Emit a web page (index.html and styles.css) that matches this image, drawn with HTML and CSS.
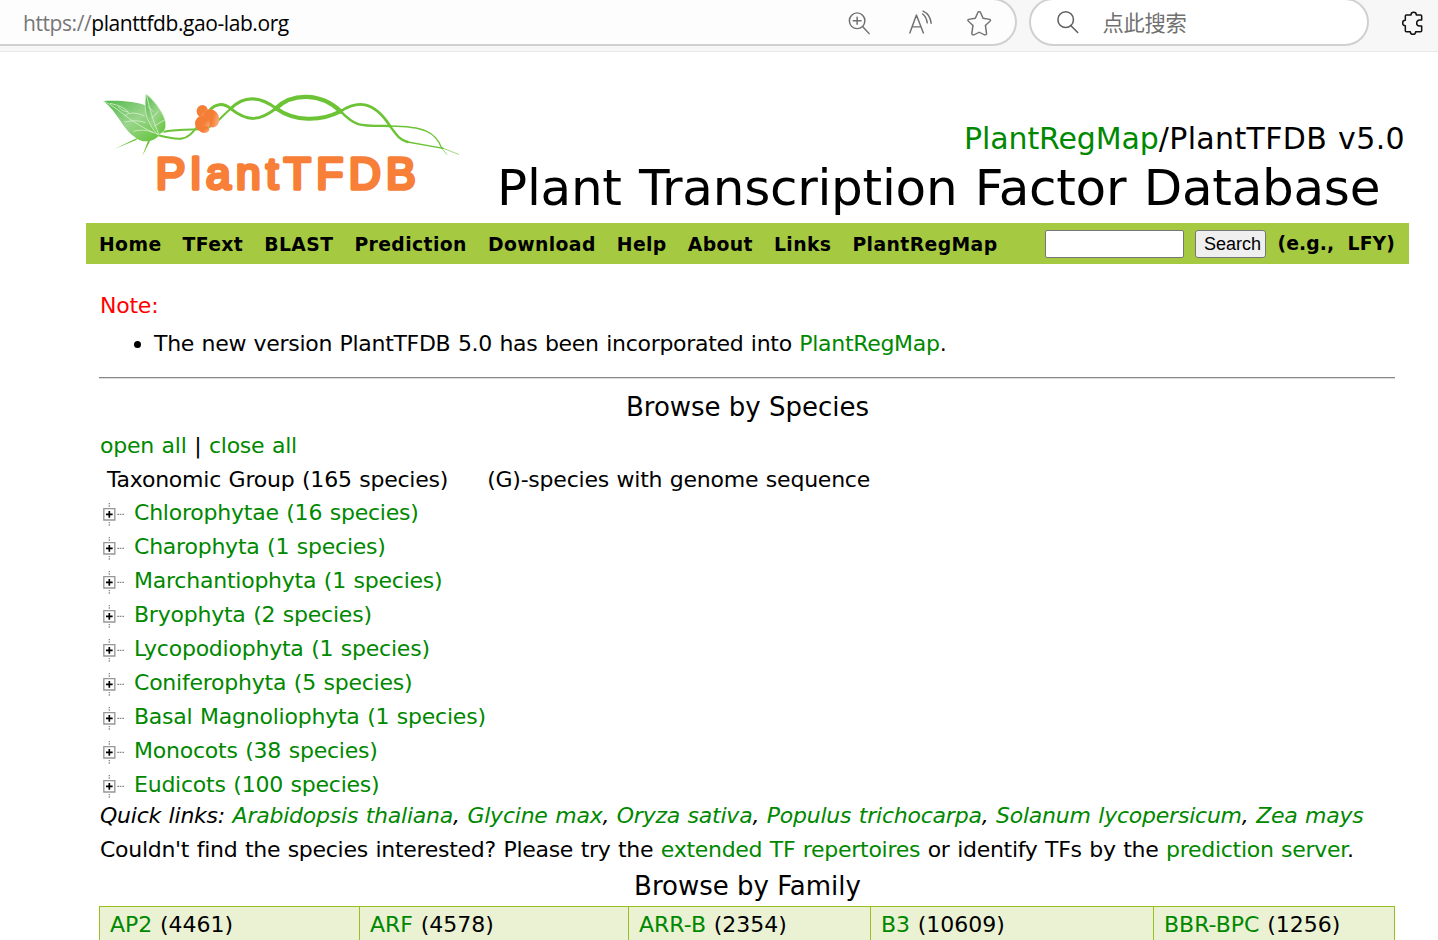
FILE: index.html
```html
<!DOCTYPE html>
<html lang="en">
<head>
<meta charset="utf-8">
<title>PlantTFDB - Plant Transcription Factor Database</title>
<link rel="stylesheet" href="styles.css">
</head>
<body>
<svg class="defs" width="0" height="0">
  <defs>
    <linearGradient id="leaf" x1="0" y1="0" x2="1" y2="1"><stop offset="0" stop-color="#4fb848"/><stop offset=".5" stop-color="#9ad58c"/><stop offset="1" stop-color="#5fc234"/></linearGradient>
    <linearGradient id="petal" x1="0" y1="0" x2="1" y2="1"><stop offset=".55" stop-color="#f57e36"/><stop offset="1" stop-color="#fbc4a2"/></linearGradient>
    <symbol id="node" viewBox="0 0 66 75">
      <path d="M19 3v4M19 10v4M19 60v4M19 67v4M43 37h5M50 37h5M58 37h5" fill="none" stroke="#888" stroke-width="4"/>
      <path d="M2.500 20h33v34h-33z" fill="#fff" stroke="#969696" stroke-width="4"/>
      <path d="M9 37h20M19 27v20" stroke="#000" stroke-width="5"/>
    </symbol>
  </defs>
</svg>
<header class="browser">
  <div class="address">
    <span class="url"><span class="scheme">https://</span>planttfdb.gao-lab.org</span>
    <svg class="tools" width="186" height="43" viewBox="0 0 480 120" preserveAspectRatio="none">
      <g fill="none" stroke="#707070" stroke-width="3.800" stroke-linecap="round" stroke-linejoin="round">
        <ellipse cx="70" cy="58" rx="20" ry="22"/><path d="M84 74L101 94M60 58h20M70 48v20"/>
        <path d="M206 92L223 42L241 92M212 75h23M239 39Q249 47 251 64M240 31Q259 40 261 65"/>
        <path d="M385 33Q387 31 389 36L395 51L412 54Q416 56 413 59L401 71L404 93Q404 99 398 97L385 90L372 97Q366 99 366 93L369 71L357 59Q354 56 358 54L375 51L381 36Q383 31 385 33Z"/>
      </g>
    </svg>
  </div>
  <div class="searchbox">
    <svg width="25.600" height="25.800" viewBox="0 0 66 72" preserveAspectRatio="none" fill="none" stroke="#606060" stroke-width="4" stroke-linecap="round"><ellipse cx="25" cy="27" rx="20" ry="22"/><path d="M38 43L56 63"/></svg>
    <span>点此搜索</span>
  </div>
  <svg class="puzzle" width="28" height="28" viewBox="60 30 84 84" fill="none" stroke="#111" stroke-width="4.500" stroke-linejoin="round"><path d="M79 45H93A8 8 0 0 1 109 45H122Q125 45 125 48V60H119A8.500 8.500 0 0 0 119 78H125V92Q125 95 122 95H107A8 8 0 0 1 91 95H79Q76 95 76 92V77A8 8 0 0 1 76 61V48Q76 45 79 45Z"/></svg>
</header>
<main class="page">
  <div class="banner">
    <svg class="logo" width="380" height="130" viewBox="0 0 1140 390">
      <g fill="none" stroke="#6cc335" stroke-linecap="round">
        <path d="M205 166C270 183 292 182 318 144" stroke-width="6"/>
        <path d="M222 155C260 148 290 149 330 148C375 144 390 112 422 86" stroke-width="6"/>
        <path d="M358 92C375 70 400 68 422 86C472 126 508 124 558 85" stroke-width="9"/>
        <path d="M422 86C463 45 508 48 558 85" stroke-width="9"/>
        <path d="M558 85C607 38 692 38 752 94" stroke-width="13"/>
        <path d="M558 85C615 126 692 125 752 94" stroke-width="12"/>
        <path d="M752 94C800 62 850 60 900 138" stroke-width="8"/>
        <path d="M752 94C798 142 812 137 900 138" stroke-width="7"/>
        <path d="M900 138C922 168 930 180 953 186" stroke-width="7"/>
        <path d="M900 138C1000 139 1038 155 1056 206" stroke-width="4"/>
        <path d="M953 186L1060 205" stroke-width="4"/>
        <path d="M1056 205L1070 223M1058 204L1105 223" stroke-width="2"/>
      </g>
      <path d="M143 173L73 207L139 180zM174 182L157 228L180 184z" fill="#6cc335"/>
      <path d="M40 63C90 60 143 66 168 77C200 90 230 140 208 164C193 187 157 190 138 174C96 148 83 94 40 63z" fill="url(#leaf)"/>
      <path d="M168 42C200 66 246 129 219 157L204 165C177 137 158 101 168 42z" fill="url(#leaf)" stroke="#e4f5dc" stroke-width="2"/>
      <path d="M42 64C90 85 114 127 204 163M60 70Q100 78 116 97Q95 94 84 80M103 108Q125 90 164 108M103 126Q140 118 167 128M130 154Q160 145 190 158M170 46C177 80 190 126 206 162M175 80L190 95M185 114L205 94M193 138L223 120" fill="none" stroke="#d5efc9" stroke-width="2.500"/>
      <g fill="url(#petal)"><ellipse cx="337" cy="94" rx="17" ry="19"/><ellipse cx="364" cy="115" rx="23" ry="28" transform="rotate(-25 364 115)"/><ellipse cx="337" cy="131" rx="22" ry="24"/><ellipse cx="343" cy="148" rx="15" ry="11"/></g>
      <text x="197" y="326" class="logo-text" textLength="780" lengthAdjust="spacing">PlantTFDB</text>
    </svg>
    <div class="titles">
      <div class="version"><a>PlantRegMap</a>/PlantTFDB v5.0</div>
      <h1>Plant Transcription Factor Database</h1>
    </div>
  </div>
  <nav class="menu">
    <a>Home</a><a>TFext</a><a>BLAST</a><a>Prediction</a><a>Download</a><a>Help</a><a>About</a><a>Links</a><a>PlantRegMap</a>
    <form class="find"><input type="text"><button type="button">Search</button><span>(e.g.,&nbsp; LFY)</span></form>
  </nav>
  <div class="content">
    <p class="note">Note:</p>
    <ul class="news"><li>The new version PlantTFDB 5.0 has been incorporated into <a>PlantRegMap</a>.</li></ul>
    <hr>
    <h2>Browse by Species</h2>
    <p class="toggle"><a>open all</a> | <a>close all</a></p>
    <p class="group"><span>Taxonomic Group (165 species)</span><span>(G)-species with genome sequence</span></p>
    <ul class="tree">
      <li><svg><use href="#node"/></svg><a>Chlorophytae (16 species)</a></li>
      <li><svg><use href="#node"/></svg><a>Charophyta (1 species)</a></li>
      <li><svg><use href="#node"/></svg><a>Marchantiophyta (1 species)</a></li>
      <li><svg><use href="#node"/></svg><a>Bryophyta (2 species)</a></li>
      <li><svg><use href="#node"/></svg><a>Lycopodiophyta (1 species)</a></li>
      <li><svg><use href="#node"/></svg><a>Coniferophyta (5 species)</a></li>
      <li><svg><use href="#node"/></svg><a>Basal Magnoliophyta (1 species)</a></li>
      <li><svg><use href="#node"/></svg><a>Monocots (38 species)</a></li>
      <li><svg><use href="#node"/></svg><a>Eudicots (100 species)</a></li>
    </ul>
    <p class="quick">Quick links: <a>Arabidopsis thaliana</a>, <a>Glycine max</a>, <a>Oryza sativa</a>, <a>Populus trichocarpa</a>, <a>Solanum lycopersicum</a>, <a>Zea mays</a></p>
    <p class="hint">Couldn't find the species interested? Please try the <a>extended TF repertoires</a> or identify TFs by the <a>prediction server</a>.</p>
    <h2 class="family-title">Browse by Family</h2>
    <div class="families">
      <div><a>AP2</a> (4461)</div><div><a>ARF</a> (4578)</div><div><a>ARR-B</a> (2354)</div><div><a>B3</a> (10609)</div><div><a>BBR-BPC</a> (1256)</div>
    </div>
  </div>
</main>
</body>
</html>
```
FILE: styles.css
```css
* { box-sizing: border-box; }
html { overflow: hidden; }
body { margin: 0; height: 940px; overflow: hidden; background: #fff; color: #000; font-family: Verdana, "DejaVu Sans", sans-serif; font-size: 22px; }
p, h1, h2, ul { margin: 0; padding: 0; font-weight: normal; }
a { color: #008800; }
.defs { display: block; }
.browser { height: 52px; display: flex; background: #f7f7f7; border-bottom: 1px solid #e8e8e8; overflow: hidden; }
.address { width: 1018px; height: 48px; margin: -2px 0 0 -1px; padding-left: 24px; display: flex; align-items: center; justify-content: space-between; background: #fdfdfd; border: 2px solid #d0d0d0; border-left: 0; border-radius: 0 24px 24px 0; }
.url { font: 21px/30px "Open Sans", "Noto Sans", sans-serif; white-space: nowrap; letter-spacing: -0.42px; padding-top: 1px; }
.scheme { color: #777; }
.tools { margin: 0 -1px 2px 0; flex: none; }
.searchbox { width: 340px; height: 48px; margin: -2px 0 0 12px; padding-left: 25px; display: flex; align-items: center; gap: 21px; background: #fff; border: 2px solid #d0d0d0; border-radius: 24px; color: #707070; font: 21.3px/30px "Noto Sans CJK SC", sans-serif; letter-spacing: -0.3px; }
.searchbox svg { margin-top: 2px; }
.searchbox span { margin-top: -1px; }
.puzzle { margin: 10px 0 0 31px; flex: none; }
.page { width: 1323px; margin-left: 86px; }
.banner { height: 171px; padding: 28px 0 0 4px; display: flex; }
.logo { flex: none; }
.logo-text { font: 133px "Liberation Sans", Arial, sans-serif; fill: #f77f38; stroke: #f77f38; stroke-width: 11px; stroke-linejoin: round; }
.titles { flex: 1; padding-top: 40px; white-space: nowrap; }
.version { font-size: 30px; line-height: 38px; text-align: right; padding-right: 4px; letter-spacing: 0.2px; word-spacing: 1px; }
.version a { letter-spacing: -0.1px; }
.version { letter-spacing: 0.35px; }
h1 { font-size: 50px; line-height: 60px; margin-left: 27px; letter-spacing: -0.26px; word-spacing: 1.800px; }
.menu { height: 41px; padding: 1px 14px 0 13px; display: flex; align-items: center; background: #a6c942; font-size: 18.800px; font-weight: bold; letter-spacing: 0.4px; white-space: nowrap; }
.menu > a { color: #000; margin-right: 21px; line-height: 24px; padding-top: 2px; }
.find { display: flex; align-items: center; margin-left: auto; }
.find span { letter-spacing: 0.1px; margin-top: -2px; }
.find input { width: 139px; height: 28px; border: 1px solid #767676; border-radius: 2px; padding: 0; }
.find button { width: 71px; height: 28px; margin: 0 12px 0 11px; padding: 0 0 0 5px; border: 1px solid #767676; border-radius: 3px; background: #efefef; color: #000; font: 18px "Liberation Sans", Arial, sans-serif; }
.content { padding: 25px 14px 0 13px; line-height: 34px; white-space: nowrap; letter-spacing: -0.23px; word-spacing: 0.8px; }
.note { color: #f00; padding-left: 1px; }
.news { margin-top: 4px; padding-left: 55px; letter-spacing: -0.3px; }
hr { margin: 16px 0 11px; height: 2px; border: 0; border-top: 1px solid #888; border-bottom: 1px solid #ddd; }
h2 { font-size: 26px; line-height: 34px; text-align: center; letter-spacing: 0; word-spacing: 0; padding-left: 1px; }
.toggle { margin-top: 5px; padding-left: 1px; }
.group { display: flex; gap: 39px; padding-left: 8px; }
.tree { list-style: none; margin-top: -1px; }
.tree li { height: 34px; display: flex; align-items: center; }
.tree svg { width: 22px; height: 25px; margin: 2px 9px 0 4px; }
.quick { font-style: italic; margin-top: -3px; padding-left: 1px; }
.hint { letter-spacing: -0.28px; padding-left: 1px; }
.family-title { margin-top: 2px; }
.families { display: grid; grid-template-columns: 260px 269px 242px 283px 241px; width: 1296px; height: 60px; margin-top: 3px; background: #eaf2d3; border: 1px solid #98bf21; letter-spacing: 0; word-spacing: 0.7px; }
.families div { padding-left: 10px; line-height: 36px; border-right: 1px solid #98bf21; }
```
